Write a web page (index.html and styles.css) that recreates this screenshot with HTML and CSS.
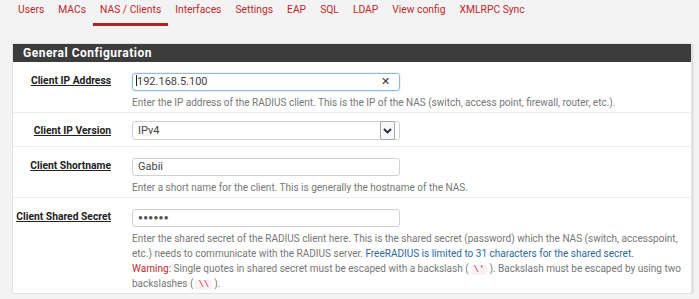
FILE: index.html
```html
<!DOCTYPE html>
<html lang="en">
  <head>
    <meta charset="UTF-8" />
    <title>FreeRADIUS: NAS / Clients</title>
    <link rel="stylesheet" href="styles.css">
  </head>
  <body>
    <!-- Tabs -->
    <nav class="tabs">
      <a href="#">Users</a>
      <a href="#">MACs</a>
      <a href="#" class="active">NAS / Clients</a>
      <a href="#">Interfaces</a>
      <a href="#">Settings</a>
      <a href="#">EAP</a>
      <a href="#">SQL</a>
      <a href="#">LDAP</a>
      <a href="#">View config</a>
      <a href="#">XMLRPC Sync</a>
    </nav>

    <div class="panel">
      <div class="panel-heading">General Configuration</div>
      <div class="panel-body">
        <div class="form-row">
          <label class="form-label">Client IP Address</label>
          <div class="form-field">
            <div class="input focus">
              <span class="caret"></span>192.168.5.100
              <span class="clear">&#x2715;</span>
            </div>
            <div class="help">Enter the IP address of the RADIUS client. This is the IP of the NAS (switch, access point, firewall, router, etc.).</div>
          </div>
        </div>

        <div class="form-row select-row">
          <label class="form-label">Client IP Version</label>
          <div class="form-field">
            <div class="input select">
              IPv4
              <span class="arrow">
                <svg width="9" height="6" viewBox="0 0 9 6"><path d="M1 1 L4.5 4.5 L8 1" fill="none" stroke="#1e2a44" stroke-width="1.8"/></svg>
              </span>
            </div>
          </div>
        </div>

        <div class="form-row">
          <label class="form-label">Client Shortname</label>
          <div class="form-field">
            <div class="input">Gabii</div>
            <div class="help">Enter a short name for the client. This is generally the hostname of the NAS.</div>
          </div>
        </div>

        <div class="form-row">
          <label class="form-label">Client Shared Secret</label>
          <div class="form-field">
            <div class="input dots">&#x25CF;&#x25CF;&#x25CF;&#x25CF;&#x25CF;&#x25CF;</div>
            <div class="help">
              <p>Enter the shared secret of the RADIUS client here. This is the shared secret (password) which the NAS (switch, accesspoint, etc.) needs to communicate with the RADIUS server. <span class="info">FreeRADIUS is limited to 31 characters for the shared secret.</span></p>
              <p><span class="warn">Warning:</span> Single quotes in shared secret must be escaped with a backslash (<code>\'</code>). Backslash must be escaped by using two backslashes (<code>\\</code>).</p>
            </div>
          </div>
        </div>
      </div>
    </div>
  </body>
</html>
```

FILE: styles.css
```css
body {
  margin: 0;
  background-color: #f3f3f3;
  font-family: Roboto, "Liberation Sans", sans-serif;
  color: #333;
}

/* Tabs */
.tabs {
  display: flex;
  padding: 3px 0 0 11px;
}
.tabs a {
  display: block;
  padding: 0 7px;
  font-size: 10.3px;
  line-height: 14px;
  height: 20px;
  color: #c0282d;
  text-decoration: none;
  border-bottom: 3px solid transparent;
}
.tabs a.active {
  border-bottom-color: #b31e22;
}

/* Panel */
.panel {
  margin: 17px 7px 0 12px;
  background-color: #fff;
  border: 1px solid #e2e2e2;
  box-shadow: 1px 1px 2px rgba(0, 0, 0, 0.12);
}
.panel-heading {
  background-color: #3c3c3c;
  color: #fff;
  font-size: 12px;
  font-weight: bold;
  letter-spacing: 0.5px;
  padding: 0 10px;
  height: 18px;
  line-height: 18px;
}

.form-row {
  display: flex;
  border-top: 1px solid #ececec;
  padding: 11px 0 2px;
}
.form-row:first-child {
  border-top: none;
}
.form-row.select-row {
  padding: 8px 0 6px;
}
.form-label {
  width: 98px;
  flex: none;
  text-align: right;
  white-space: nowrap;
  font-size: 10.3px;
  line-height: 15px;
  font-weight: bold;
  text-decoration: underline;
  color: #222;
}
.select-row .form-label {
  padding-top: 2px;
}
.form-field {
  margin-left: 21px;
  flex: 1;
  padding-right: 7px;
}

.input {
  position: relative;
  box-sizing: border-box;
  width: 268px;
  height: 18px;
  border: 1px solid #d0d0d0;
  border-radius: 3px;
  padding: 0 5px;
  font-size: 11px;
  line-height: 16px;
  color: #444;
}
.input.focus {
  border-color: #8ab9e8;
  box-shadow: 0 0 2px rgba(102, 175, 233, 0.5);
  padding-left: 3px;
}
.caret {
  display: inline-block;
  width: 1px;
  height: 11px;
  background-color: #222;
  vertical-align: -1px;
}
.clear {
  position: absolute;
  right: 9px;
  top: 0;
  font-size: 11px;
  color: #333;
}
.input.select {
  height: 19px;
  line-height: 17px;
}
.select .arrow {
  position: absolute;
  right: 4px;
  top: -1px;
  box-sizing: border-box;
  width: 15px;
  height: 19px;
  border: 1px solid #a8a8a8;
  border-radius: 2px;
  background-color: #f8f8f8;
  display: flex;
  align-items: center;
  justify-content: center;
}
.dots {
  font-size: 8px;
  letter-spacing: 0.3px;
  color: #555;
}

.help {
  font-size: 10px;
  line-height: 15px;
  color: #777;
  margin-top: 4px;
}
.help p {
  margin: 0;
}
.help .info {
  color: #2d6a9a;
}
.help .warn {
  color: #c0282d;
}
code {
  font-family: "Liberation Mono", monospace;
  font-size: 9px;
  line-height: 10px;
  color: #c7254e;
  background-color: #f9f2f4;
  margin: 0 2px;
  padding: 0 3px;
  border-radius: 2px;
}
```
